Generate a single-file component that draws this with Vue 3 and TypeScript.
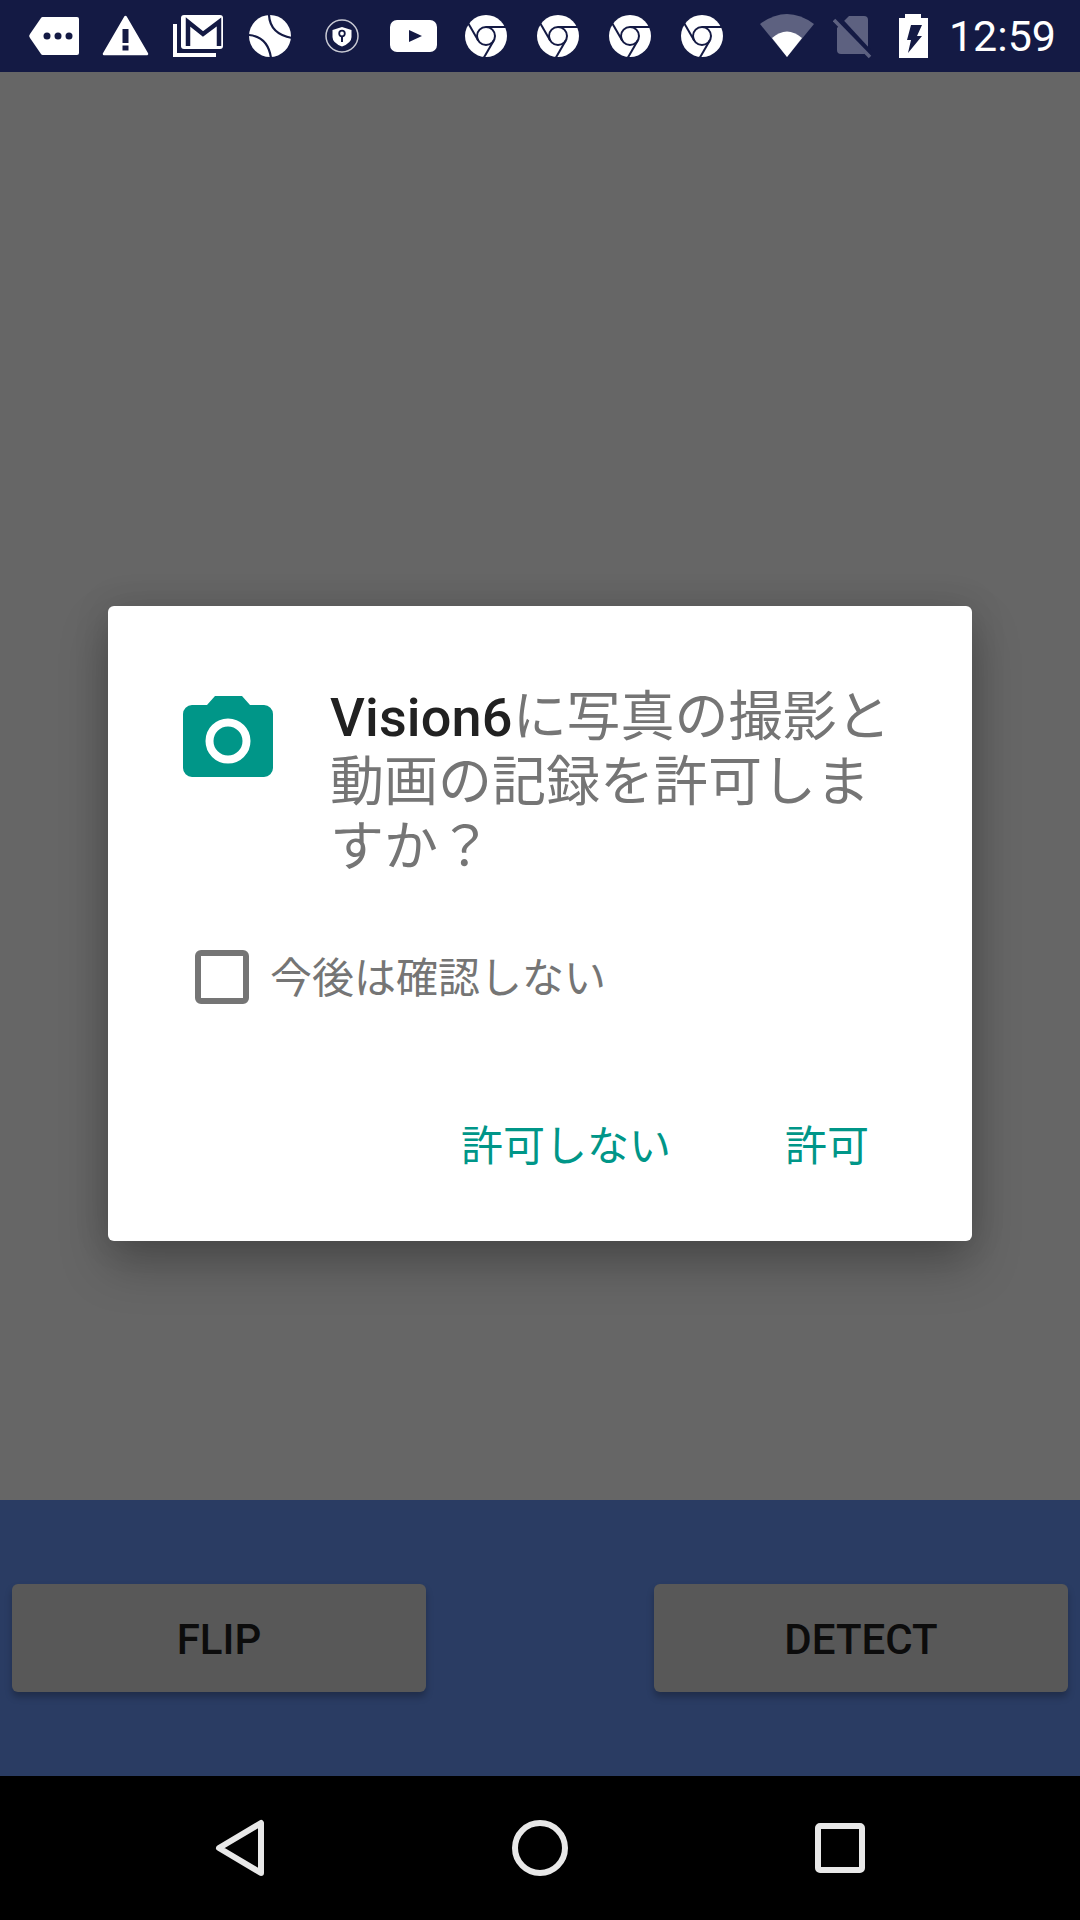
<script setup lang="ts">
const chromeCount: number[] = [0, 1, 2, 3]
const spokes: number[] = [0, 120, 240]
const dark = '#141a44'
</script>

<template>
  <div class="screen">
    <header class="status">
      <div class="notifs">
        <svg class="slot" viewBox="0 0 72 72">
          <path d="M25 17H59a2 2 0 0 1 2 2V53a2 2 0 0 1-2 2H25a2 2 0 0 1-2-1L12 38a3 3 0 0 1 0-4L23 18a2 2 0 0 1 2-1Z" fill="#fff" />
          <circle cx="29" cy="36" r="3.5" :fill="dark" />
          <circle cx="40" cy="36" r="3.5" :fill="dark" />
          <circle cx="51" cy="36" r="3.5" :fill="dark" />
        </svg>
        <svg class="slot" viewBox="0 0 72 72">
          <path d="M35.5 17L57 54H14Z" fill="#fff" stroke="#fff" stroke-width="2.5" stroke-linejoin="round" />
          <rect x="32.5" y="29" width="6" height="14" :fill="dark" />
          <rect x="32.5" y="45.5" width="6" height="5" :fill="dark" />
        </svg>
        <svg class="slot" viewBox="0 0 72 72">
          <path d="M13 24V55H54" fill="none" stroke="#fff" stroke-width="4" />
          <rect x="19" y="15" width="42" height="34" rx="3" fill="#fff" />
          <path d="M26 46V22L41 34L57 22V46" fill="none" :stroke="dark" stroke-width="4.5" />
        </svg>
        <svg class="slot" viewBox="0 0 72 72">
          <circle cx="36" cy="36" r="21" fill="#fff" />
          <path d="M35 15Q36 34 58 38M15 35Q34 37 37 58" fill="none" :stroke="dark" stroke-width="2.2" />
        </svg>
        <svg class="slot" viewBox="0 0 72 72">
          <circle cx="36" cy="36" r="16" fill="none" stroke="#c9cad4" stroke-width="1.5" />
          <path d="M36 27L45.5 30V37Q45.5 43 36 46.5Q26.5 43 26.5 37V30Z" fill="#fff" />
          <circle cx="36" cy="33.5" r="2.8" fill="none" :stroke="dark" stroke-width="1.8" />
          <path d="M36 36V42" :stroke="dark" stroke-width="2" />
        </svg>
        <svg class="slot" viewBox="0 0 72 72">
          <rect x="12" y="20" width="47" height="32" rx="7" fill="#fff" />
          <path d="M31 30L44 36L31 42Z" :fill="dark" />
        </svg>
        <svg v-for="c in chromeCount" :key="c" class="slot" viewBox="0 0 72 72">
          <circle cx="36" cy="36" r="21" fill="#fff" />
          <g fill="none" :stroke="dark" stroke-width="2">
            <circle cx="36" cy="36" r="9" />
            <path
              v-for="a in spokes"
              :key="a"
              d="M36 27H56"
              :transform="`rotate(${a} 36 36)`"
            />
          </g>
        </svg>
      </div>
      <div class="system">
        <svg class="sys wifi" viewBox="760 0 54 72">
          <path d="M760 24Q787 4 814 24L787 57Z" fill="#5d6180" />
          <path d="M772 38Q787 25 802 38L787 57Z" fill="#fff" />
        </svg>
        <svg class="sys sim" viewBox="833 0 39 72">
          <path d="M849 16H864a4 4 0 0 1 4 4V50a4 4 0 0 1-4 4H841a4 4 0 0 1-4-4V28Z" fill="#5d6180" />
          <path d="M836 17L871 55" :stroke="dark" stroke-width="7" />
          <path d="M834 20L870 57" stroke="#5d6180" stroke-width="3.5" />
        </svg>
        <svg class="sys battery" viewBox="899 0 29 72">
          <path d="M905 14H921V18H928V58H899V18H905Z" fill="#fff" />
          <path d="M911 25H922L917 36H922L908 53L911 40H907Z" :fill="dark" />
        </svg>
        <span class="clock">12:59</span>
      </div>
    </header>

    <main class="canvas"></main>

    <footer class="controls">
      <button class="raised" type="button">FLIP</button>
      <button class="raised" type="button">DETECT</button>
    </footer>

    <nav class="nav">
      <div class="nav-slot">
        <svg class="nav-icon" viewBox="0 0 72 72">
          <path d="M15 36L57 11V61Z" fill="none" stroke="#e8e8e8" stroke-width="6" stroke-linejoin="round" />
        </svg>
      </div>
      <div class="nav-slot">
        <svg class="nav-icon" viewBox="0 0 72 72">
          <circle cx="36" cy="36" r="25" fill="none" stroke="#e8e8e8" stroke-width="6" />
        </svg>
      </div>
      <div class="nav-slot">
        <svg class="nav-icon" viewBox="0 0 72 72">
          <rect x="14" y="14" width="44" height="44" rx="2" fill="none" stroke="#e8e8e8" stroke-width="6" />
        </svg>
      </div>
    </nav>

    <div class="overlay">
      <section class="dialog">
        <div class="head">
          <svg class="camera" viewBox="0 0 90 81">
            <path d="M9 9H24L32 0H59L67 9H81a9 9 0 0 1 9 9V72a9 9 0 0 1-9 9H9a9 9 0 0 1-9-9V18a9 9 0 0 1 9-9Z" fill="#009688" />
            <circle cx="45" cy="45" r="18.5" fill="none" stroke="#fff" stroke-width="8" />
          </svg>
          <p class="title"><strong>Vision6</strong>に写真の撮影と動画の記録を許可しますか？</p>
        </div>
        <label class="check-row">
          <span class="box"></span>
          <span class="check-label">今後は確認しない</span>
        </label>
        <div class="actions">
          <button class="text-btn" type="button">許可しない</button>
          <button class="text-btn" type="button">許可</button>
        </div>
      </section>
    </div>
  </div>
</template>

<style scoped>
.screen {
  position: relative;
  width: 1080px;
  height: 1920px;
  display: flex;
  flex-direction: column;
  overflow: hidden;
  font-family: Roboto, "Noto Sans CJK JP", sans-serif;
}
.status {
  height: 72px;
  flex: none;
  background: #141a44;
  display: flex;
  justify-content: space-between;
  padding: 0 24px 0 18px;
}
.notifs {
  display: flex;
}
.slot {
  width: 72px;
  height: 72px;
  flex: none;
}
.system {
  display: flex;
  align-items: center;
}
.sys {
  height: 72px;
  flex: none;
}
.wifi {
  width: 54px;
  margin-right: 19px;
}
.sim {
  width: 39px;
  margin-right: 27px;
}
.battery {
  width: 29px;
  margin-right: 21px;
}
.clock {
  color: #fff;
  font-size: 43px;
  line-height: 72px;
}
.canvas {
  flex: 1;
  background: #666666;
}
.controls {
  height: 276px;
  flex: none;
  background: #2a3c63;
  display: flex;
  justify-content: space-between;
  align-items: center;
  padding: 0 12px;
}
.raised {
  width: 414px;
  height: 108px;
  border: 0;
  border-radius: 6px;
  background: #585858;
  color: #0c0c0c;
  font-family: Roboto, sans-serif;
  font-size: 42px;
  font-weight: 500;
  padding: 2px 0 0;
  box-shadow: 0 5px 7px rgba(0, 0, 0, 0.25);
}
.nav {
  height: 144px;
  flex: none;
  background: #000;
  display: flex;
  justify-content: center;
  align-items: center;
}
.nav-slot {
  width: 300px;
  display: flex;
  justify-content: center;
}
.nav-icon {
  width: 72px;
  height: 72px;
}
.overlay {
  position: absolute;
  top: 72px;
  left: 0;
  right: 0;
  bottom: 145px;
  display: flex;
  align-items: center;
  justify-content: center;
}
.dialog {
  width: 864px;
  height: 635px;
  background: #fff;
  border-radius: 6px;
  box-shadow: 0 24px 48px rgba(0, 0, 0, 0.25), 0 0 36px rgba(0, 0, 0, 0.12);
  padding: 79px 0 64px;
  box-sizing: border-box;
  display: flex;
  flex-direction: column;
}
.head {
  display: flex;
  padding-left: 75px;
  gap: 57px;
}
.camera {
  width: 90px;
  height: 81px;
  flex: none;
  margin-top: 11px;
}
.title {
  margin: 0;
  width: 570px;
  font-size: 54px;
  line-height: 65px;
  color: #757575;
}
.title strong {
  color: #212121;
  font-weight: 500;
  letter-spacing: 0.15px;
}
.check-row {
  display: flex;
  align-items: center;
  gap: 21px;
  margin: 68px 0 0 87px;
}
.box {
  width: 54px;
  height: 54px;
  box-sizing: border-box;
  border: 6px solid #757575;
  border-radius: 6px;
  flex: none;
}
.check-label {
  font-size: 42px;
  line-height: 54px;
  padding-top: 4px;
  color: #757575;
}
.actions {
  display: flex;
  justify-content: flex-end;
  gap: 114px;
  margin-top: 111px;
  padding-right: 103px;
}
.text-btn {
  border: 0;
  background: none;
  padding: 0;
  color: #009688;
  font-family: Roboto, "Noto Sans CJK JP", sans-serif;
  font-size: 42px;
  line-height: 60px;
}
</style>
